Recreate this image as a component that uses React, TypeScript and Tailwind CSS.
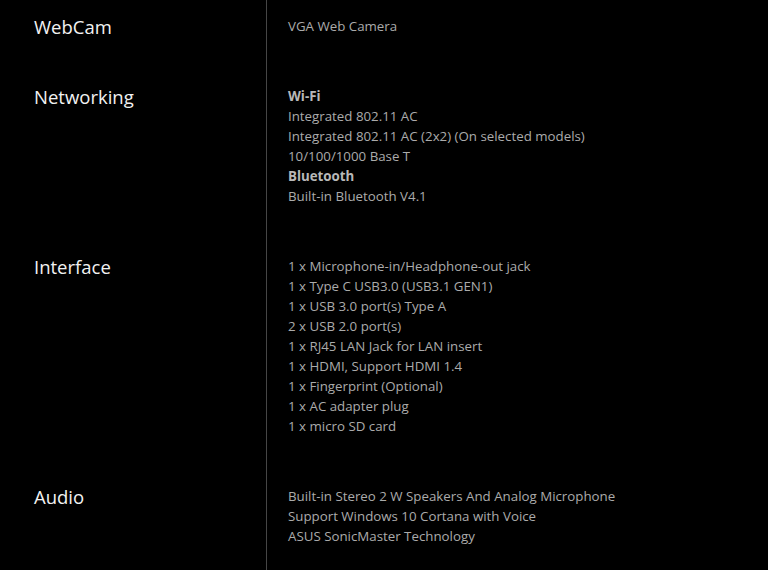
const specs: { label: string; lines: { text: string; bold?: boolean }[] }[] = [
  { label: 'WebCam', lines: [{ text: 'VGA Web Camera' }] },
  {
    label: 'Networking',
    lines: [
      { text: 'Wi-Fi', bold: true },
      { text: 'Integrated 802.11 AC' },
      { text: 'Integrated 802.11 AC (2x2) (On selected models)' },
      { text: '10/100/1000 Base T' },
      { text: 'Bluetooth', bold: true },
      { text: 'Built-in Bluetooth V4.1' },
    ],
  },
  {
    label: 'Interface',
    lines: [
      { text: '1 x Microphone-in/Headphone-out jack' },
      { text: '1 x Type C USB3.0 (USB3.1 GEN1)' },
      { text: '1 x USB 3.0 port(s) Type A' },
      { text: '2 x USB 2.0 port(s)' },
      { text: '1 x RJ45 LAN Jack for LAN insert' },
      { text: '1 x HDMI, Support HDMI 1.4' },
      { text: '1 x Fingerprint (Optional)' },
      { text: '1 x AC adapter plug' },
      { text: '1 x micro SD card' },
    ],
  },
  {
    label: 'Audio',
    lines: [
      { text: 'Built-in Stereo 2 W Speakers And Analog Microphone' },
      { text: 'Support Windows 10 Cortana with Voice' },
      { text: 'ASUS SonicMaster Technology' },
    ],
  },
]

export default function App() {
  return (
    <div className="flex h-[570px] flex-col overflow-hidden bg-black font-['Open_Sans',sans-serif]">
      {specs.map((spec, i) => {
        const first = i === 0
        const last = i === specs.length - 1
        return (
          <div
            key={spec.label}
            className={`flex ${first ? 'pt-0' : ''} ${last ? 'flex-1' : ''}`}
          >
            <div
              className={`w-[267px] shrink-0 border-r border-[#464646] pl-[34px] ${
                first ? 'pt-[16px]' : ''
              }`}
            >
              <h3 className="text-[18.5px] leading-[21px] text-[#f2f2f2]">{spec.label}</h3>
            </div>
            <div
              className={`pl-[21px] ${first ? 'pt-[16px]' : ''} ${
                last ? 'pb-[24px]' : 'pb-[50px]'
              }`}
            >
              {spec.lines.map((line) => (
                <p
                  key={line.text}
                  className={`text-[13.3px] leading-[20px] ${
                    line.bold ? 'font-bold text-[#b8b8b8]' : 'text-[#ababab]'
                  }`}
                >
                  {line.text}
                </p>
              ))}
            </div>
          </div>
        )
      })}
    </div>
  )
}
